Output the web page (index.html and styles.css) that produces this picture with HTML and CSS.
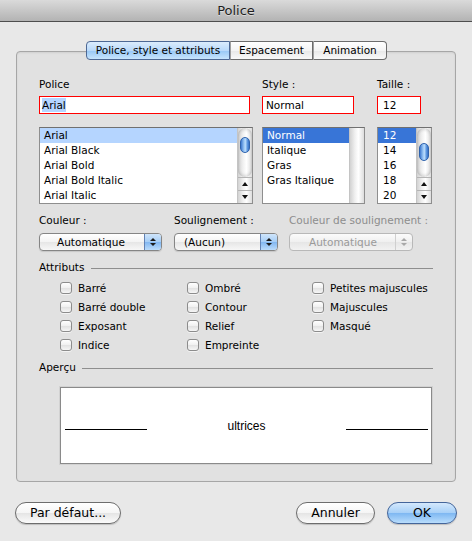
FILE: index.html
```html
<!DOCTYPE html>
<html lang="fr">
<head>
<meta charset="utf-8">
<title>Police</title>
<link rel="stylesheet" href="styles.css">
</head>
<body>
<div class="titlebar">Police</div>
<div class="tabview">
  <div class="tabs">
    <div class="tab first selected t1">Police, style et attributs</div>
    <div class="tab t2">Espacement</div>
    <div class="tab last t3">Animation</div>
  </div>
  <div class="box">
    <div class="fontrow">
      <div class="col col-font">
        <div class="label">Police</div>
        <div class="field f-font"><span class="seltext">Arial</span></div>
        <div class="list">
          <div class="items">
            <div class="item hl">Arial</div>
            <div class="item">Arial Black</div>
            <div class="item">Arial Bold</div>
            <div class="item">Arial Bold Italic</div>
            <div class="item">Arial Italic</div>
          </div>
          <div class="scroll">
            <div class="track"><div class="thumb th-font"></div></div>
            <div class="arrow up"></div>
            <div class="arrow down"></div>
          </div>
        </div>
      </div>
      <div class="col col-style">
        <div class="label">Style :</div>
        <div class="field f-style">Normal</div>
        <div class="list">
          <div class="items">
            <div class="item sel">Normal</div>
            <div class="item">Italique</div>
            <div class="item">Gras</div>
            <div class="item">Gras Italique</div>
          </div>
          <div class="scroll empty">
            <div class="track full"></div>
          </div>
        </div>
      </div>
      <div class="col col-size">
        <div class="label">Taille :</div>
        <div class="field f-size">12</div>
        <div class="list">
          <div class="items">
            <div class="item sel num">12</div>
            <div class="item num">14</div>
            <div class="item num">16</div>
            <div class="item num">18</div>
            <div class="item num">20</div>
          </div>
          <div class="scroll">
            <div class="track"><div class="thumb th-size"></div></div>
            <div class="arrow up"></div>
            <div class="arrow down"></div>
          </div>
        </div>
      </div>
    </div>

    <div class="poprow">
      <div class="pcol pc1">
        <div class="label">Couleur :</div>
        <div class="popup w1"><span class="val center">Automatique</span><span class="arr"><i class="tu"></i><i class="td"></i></span></div>
      </div>
      <div class="pcol pc2">
        <div class="label">Soulignement :</div>
        <div class="popup w2"><span class="val left">(Aucun)</span><span class="arr"><i class="tu"></i><i class="td"></i></span></div>
      </div>
      <div class="pcol pc3">
        <div class="label disabled">Couleur de soulignement :</div>
        <div class="popup w3 off"><span class="val center">Automatique</span><span class="arr"><i class="tu"></i><i class="td"></i></span></div>
      </div>
    </div>

    <div class="section sec-attr">Attributs</div>
    <div class="checks">
      <div class="check"><span class="cb"></span>Barré</div>
      <div class="check"><span class="cb"></span>Barré double</div>
      <div class="check"><span class="cb"></span>Exposant</div>
      <div class="check"><span class="cb"></span>Indice</div>
      <div class="check"><span class="cb"></span>Ombré</div>
      <div class="check"><span class="cb"></span>Contour</div>
      <div class="check"><span class="cb"></span>Relief</div>
      <div class="check"><span class="cb"></span>Empreinte</div>
      <div class="check"><span class="cb"></span>Petites majuscules</div>
      <div class="check"><span class="cb"></span>Majuscules</div>
      <div class="check"><span class="cb"></span>Masqué</div>
    </div>

    <div class="section sec-prev">Aperçu</div>
    <div class="preview">
      <span class="rule"></span>
      <span class="sample">ultrices</span>
      <span class="rule"></span>
    </div>
  </div>
</div>
<div class="buttons">
  <div class="btn b-default">Par défaut...</div>
  <div class="btn b-cancel">Annuler</div>
  <div class="btn b-ok">OK</div>
</div>
</body>
</html>
```

FILE: styles.css
```css
* { box-sizing: border-box; }
html, body { margin: 0; padding: 0; }
body {
  width: 472px;
  height: 541px;
  overflow: hidden;
  background: #e8e8e8;
  font-family: "DejaVu Sans", sans-serif;
  font-size: 10.5px;
  color: #000;
}

/* title bar */
.titlebar {
  height: 22px;
  line-height: 21px;
  border-bottom: 1px solid #4e4e4e;
  background: linear-gradient(#dadada, #b3b3b3);
  text-align: center;
  font-size: 13px;
  color: #1e1e1e;
  text-shadow: 0 1px 0 rgba(255,255,255,0.45);
}

/* tab view */
.tabview { margin: 19px 0 0 16px; width: 440px; }
.tabs {
  display: flex;
  justify-content: center;
  position: relative;
  z-index: 1;
  height: 19px;
  padding-left: 1px;
}
.tab {
  height: 19px;
  line-height: 17px;
  text-align: center;
  border: 1px solid #6c6c6c;
  border-left: 1px solid #a0a0a0;
  background: linear-gradient(#ffffff 0%, #f4f4f4 50%, #e8e8e8 52%, #f9f9f9 100%);
  white-space: nowrap;
}
.tab.first { border-left: 1px solid #5a6f90; border-radius: 4px 0 0 4px; }
.tab.last { border-radius: 0 4px 4px 0; }
.tab.selected {
  border-color: #4d6894;
  background: linear-gradient(#dbecfd 0%, #b9d9fa 50%, #98c8f6 52%, #c7e4fd 100%);
}
.t1 { width: 144px; }
.t2 { width: 83px; }
.t3 { width: 74px; }

.box {
  margin-top: -9px;
  height: 431px;
  border: 1px solid #a6a6a6;
  border-radius: 4px;
  background: #e1e1e1;
  box-shadow: inset 0 1px 2px rgba(0,0,0,0.08);
  padding: 26px 22px 17px 22px;
}

.label { height: 13px; line-height: 13px; white-space: nowrap; }
.label.disabled { color: #8d8d8d; }

/* font row */
.fontrow { display: flex; }
.col { display: flex; flex-direction: column; }
.col-font { width: 214px; }
.col-style { width: 103px; margin-left: 9px; }
.col-size { width: 55px; margin-left: 12px; }

.field {
  margin-top: 5px;
  height: 18px;
  border: 1px solid #ff0000;
  background: #fff;
  padding: 1px 2px;
  line-height: 14px;
  white-space: nowrap;
}
.f-font { width: 211px; }
.f-style { width: 92px; padding-left: 3px; }
.f-size { width: 44px; padding-left: 5px; }
.seltext { background: #b5d5ff; padding: 1px 0; }

.list {
  margin-top: 13px;
  height: 77px;
  display: flex;
  background: #fff;
  border: 1px solid #8e8e8e;
  border-top-color: #707070;
}
.items { flex: 1; overflow: hidden; }
.item {
  height: 15px;
  line-height: 15px;
  padding-left: 4px;
  white-space: nowrap;
}
.item.num { padding-left: 5px; }
.item.hl { background: #b5d5ff; }
.item.sel { background: #3875d7; color: #fff; }

.scroll {
  width: 15px;
  display: flex;
  flex-direction: column;
  border-left: 1px solid #c4c4c4;
  background: linear-gradient(to right, #d2d2d2, #f0f0f0 35%, #ffffff 60%, #dddddd);
}
.track {
  flex: 1;
  display: flex;
  flex-direction: column;
  align-items: center;
  border-radius: 7px;
  box-shadow: inset 0 2px 3px rgba(0,0,0,0.12), inset 0 -2px 3px rgba(0,0,0,0.12);
}
.track.full { border-radius: 0; box-shadow: none; }
.thumb {
  width: 10px;
  border-radius: 5px;
  border: 1px solid #2f63ad;
  background: linear-gradient(to right, #3f7ad0, #9dc9f6 40%, #b9dbfb 55%, #5d97e0 80%, #3a72c4);
}
.th-font { margin-top: 9px; height: 16px; }
.th-size { margin-top: 15px; height: 18px; }
.arrow {
  height: 13px;
  border-top: 1px solid #b4b4b4;
  display: flex;
  align-items: center;
  justify-content: center;
}
.arrow::before {
  content: "";
  border-left: 3px solid transparent;
  border-right: 3px solid transparent;
}
.arrow.up::before { border-bottom: 4px solid #111; }
.arrow.down::before { border-top: 4px solid #111; }

/* popups row */
.poprow { display: flex; margin-top: 10px; }
.pcol { display: flex; flex-direction: column; }
.pc1 { width: 135px; }
.pc2 { width: 115px; }
.pc3 { flex: 1; }
.popup {
  margin-top: 6px;
  height: 18px;
  display: flex;
  border: 1px solid #858585;
  border-radius: 4px;
  overflow: hidden;
  background: linear-gradient(#ffffff 0%, #f3f3f3 50%, #e6e6e6 52%, #f7f7f7 100%);
  box-shadow: 0 1px 1px rgba(0,0,0,0.12);
}
.w1 { width: 123px; }
.w2 { width: 104px; }
.w3 { width: 124px; }
.popup .val { flex: 1; line-height: 16px; white-space: nowrap; }
.popup .val.center { padding-left: 17px; }
.popup .val.left { padding-left: 9px; }
.popup .arr {
  width: 17px;
  border-left: 1px solid #6282b4;
  background: linear-gradient(#cfe5fb 0%, #a5cdf6 50%, #82b7f1 52%, #bcdcfb 100%);
  display: flex;
  flex-direction: column;
  align-items: center;
  justify-content: center;
  gap: 2px;
}
.tu, .td { display: block; width: 0; height: 0; border-left: 3px solid transparent; border-right: 3px solid transparent; }
.tu { border-bottom: 3px solid #1b1b1b; }
.td { border-top: 3px solid #1b1b1b; }
.popup.off { border-color: #b8b8b8; box-shadow: none; background: linear-gradient(#fbfbfb, #efefef 50%, #e6e6e6 52%, #f2f2f2); }
.popup.off .val { color: #9a9a9a; }
.popup.off .val.center { padding-left: 19px; }
.popup.off .arr { border-left-color: #cfcfcf; background: transparent; }
.popup.off .tu { border-bottom-color: #a8a8a8; }
.popup.off .td { border-top-color: #a8a8a8; }

/* sections */
.section {
  display: flex;
  align-items: center;
  height: 13px;
  line-height: 13px;
}
.section::after {
  content: "";
  flex: 1;
  border-top: 1px solid #8e8e8e;
  margin-left: 7px;
  margin-top: 1px;
}
.sec-attr { margin-top: 10px; }
.sec-prev { margin-top: 7px; }
.sec-prev::after { margin-left: 6px; }

.checks {
  margin: 4px 0 0 21px;
  display: grid;
  grid-template-columns: 127px 125px auto;
  grid-template-rows: repeat(4, 19px);
  grid-auto-flow: column;
}
.check { display: flex; align-items: center; white-space: nowrap; }
.cb {
  width: 12px;
  height: 12px;
  margin-right: 6px;
  border: 1px solid #8c8c8c;
  border-radius: 3px;
  background: linear-gradient(#ffffff 0%, #f0f0f0 50%, #e2e2e2 52%, #f6f6f6 100%);
  box-shadow: 0 1px 0 rgba(255,255,255,0.6);
}

.preview {
  margin: 13px 0 0 21px;
  width: 372px;
  height: 77px;
  background: #fff;
  border: 1px solid #8a8a8a;
  box-shadow: 0 0 0 1px #d2d2d2;
  display: grid;
  grid-template-columns: 82px 1fr 82px;
  align-items: center;
  padding: 0 3px 0 4px;
  font-family: "Liberation Sans", Arial, sans-serif;
  font-size: 12px;
}
.preview .rule { border-top: 1px solid #000; margin-top: 8px; }
.preview .sample { text-align: center; }

/* buttons */
.buttons { display: flex; margin-top: 20px; padding: 0 15px; gap: 12px; }
.btn {
  height: 22px;
  border: 1px solid #6d6d6d;
  border-radius: 11px;
  background: linear-gradient(#ffffff 0%, #f5f5f5 50%, #e5e5e5 52%, #fbfbfb 100%);
  font-size: 12.5px;
  line-height: 20px;
  text-align: center;
  box-shadow: 0 1px 1px rgba(0,0,0,0.18);
  white-space: nowrap;
}
.b-default { width: 106px; margin-right: auto; }
.b-cancel { width: 79px; }
.b-ok {
  width: 70px;
  border-color: #44659a;
  background: linear-gradient(#d4e8fc 0%, #a6cff7 50%, #7fb8f2 52%, #b9ddfc 100%);
}
```
